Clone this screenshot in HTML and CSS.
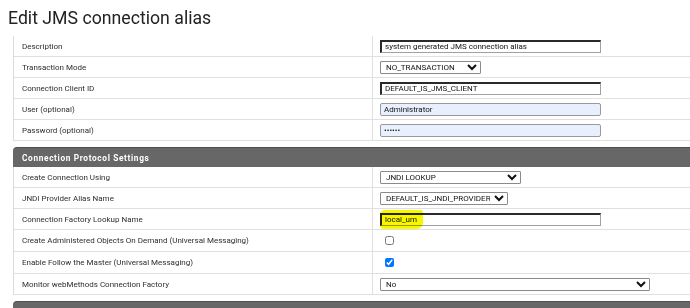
FILE: index.html
```html
<!DOCTYPE html>
<html>
<head>
<meta charset="utf-8">
<link rel="stylesheet" href="styles.css">
</head>
<body>
<h1 class="title">Edit JMS connection alias</h1>
<div class="wrap">
  <div class="panel">
    <div class="row"><div class="label">Description</div><div class="value"><input class="txt inset" value="system generated JMS connection alias"></div></div>
    <div class="row"><div class="label">Transaction Mode</div><div class="value"><select class="sel sel-tx"><option>NO_TRANSACTION</option></select></div></div>
    <div class="row"><div class="label">Connection Client ID</div><div class="value"><input class="txt inset" value="DEFAULT_IS_JMS_CLIENT"></div></div>
    <div class="row"><div class="label">User (optional)</div><div class="value"><input class="txt filled" value="Administrator"></div></div>
    <div class="row"><div class="label">Password (optional)</div><div class="value"><input class="txt filled" type="password" value="abcdef"></div></div>
  </div>
  <div class="panel-head">Connection Protocol Settings</div>
  <div class="panel">
    <div class="row"><div class="label">Create Connection Using</div><div class="value"><select class="sel sel-jndi"><option>JNDI LOOKUP</option></select></div></div>
    <div class="row"><div class="label">JNDI Provider Alias Name</div><div class="value"><select class="sel sel-prov"><option>DEFAULT_IS_JNDI_PROVIDER</option></select></div></div>
    <div class="row"><div class="label">Connection Factory Lookup Name</div><div class="value"><input class="txt inset" value="local_um"><span class="marker"></span></div></div>
    <div class="row tall"><div class="label">Create Administered Objects On Demand (Universal Messaging)</div><div class="value"><input type="checkbox" class="chk"></div></div>
    <div class="row tall"><div class="label">Enable Follow the Master (Universal Messaging)</div><div class="value"><input type="checkbox" class="chk" checked></div></div>
    <div class="row"><div class="label">Monitor webMethods Connection Factory</div><div class="value"><select class="sel sel-no"><option>No</option></select></div></div>
  </div>
  <div class="panel-head"></div>
</div>
</body>
</html>
```

FILE: styles.css
```css
html, body {
  margin: 0;
  padding: 0;
  background: #fff;
}
body {
  width: 690px;
  height: 308px;
  overflow: hidden;
  font-family: Roboto, "Liberation Sans", sans-serif;
  color: #333;
}
.title {
  margin: 0 0 7px 0;
  padding: 7px 0 0 8px;
  font-size: 17.7px;
  font-weight: 400;
  line-height: 22px;
  color: #222;
}
.wrap {
  margin-left: 13px;
  width: 677px;
  overflow: hidden;
}
.panel {
  border-left: 1px solid #dcdcdc;
}
.row {
  display: grid;
  grid-template-columns: 359px 1fr;
  height: 21px;
  box-sizing: border-box;
  border-bottom: 1px solid #e0e0e0;
}
.row.tall {
  height: 22px;
}
.label {
  display: flex;
  align-items: center;
  padding-left: 8px;
  font-size: 8px;
  color: #2e2e2e;
  border-right: 1px solid #e0e0e0;
}
.value {
  position: relative;
  display: flex;
  align-items: center;
  padding-left: 7px;
}
.txt {
  width: 221px;
  height: 13px;
  box-sizing: border-box;
  margin: 0;
  padding: 0 3px;
  font-family: Roboto, "Liberation Sans", sans-serif;
  font-size: 8px;
  color: #111;
  outline: none;
}
.inset {
  background: #fff;
  border-style: solid;
  border-width: 2px 1px 1px 2px;
  border-color: #2a2a2a #a0a0a0 #a0a0a0 #2a2a2a;
}
.filled {
  background: #e8f0fe;
  border: 1px solid #9a9a9a;
  border-radius: 2px;
}
.sel {
  height: 13px;
  box-sizing: border-box;
  margin: 0;
  padding: 0 1px;
  font-family: Roboto, "Liberation Sans", sans-serif;
  font-size: 8px;
  color: #111;
  background: #fff;
  border: 1px solid #8a8a8a;
  border-radius: 1px;
}
.sel-tx { width: 101px; }
.sel-jndi { width: 141px; }
.sel-prov { width: 128px; }
.sel-no { width: 270px; }
.chk {
  width: 9px;
  height: 9px;
  margin: 0 0 0 5px;
}
.marker {
  position: absolute;
  left: 7px;
  top: 1px;
  width: 43px;
  height: 19px;
  background: #f7f700;
  border-radius: 5px 3px 6px 4px;
  mix-blend-mode: multiply;
  pointer-events: none;
}
.panel-head {
  margin-top: 6px;
  height: 20px;
  box-sizing: border-box;
  display: flex;
  align-items: center;
  padding-left: 9px;
  background: #676767;
  border-top: 1px solid #505050;
  border-top-left-radius: 4px;
  color: #fff;
  font-size: 8.3px;
  font-weight: 700;
  letter-spacing: 0.65px;
}
```
